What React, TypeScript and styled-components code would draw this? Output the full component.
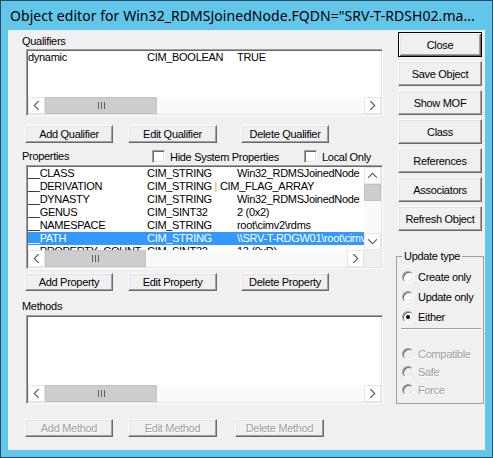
import React from "react";
import styled, { createGlobalStyle } from "styled-components";

const GlobalStyle = createGlobalStyle`
  html, body {
    margin: 0;
    padding: 0;
  }
  body {
    font-family: "Liberation Sans", Arial, sans-serif;
    font-size: 11px;
    letter-spacing: -0.3px;
    color: #000;
  }
`;

const Window = styled.div`
  width: 493px;
  height: 458px;
  box-sizing: border-box;
  border: 1px solid #2d4b5c;
  background: #62c6ea;
  display: flex;
  flex-direction: column;
`;

const TitleBar = styled.div`
  height: 29px;
  padding-left: 9px;
  display: flex;
  align-items: center;
  font-family: "Noto Sans", "Open Sans", sans-serif;
  font-size: 14px;
  letter-spacing: 0.05px;
  color: #000;
  white-space: nowrap;
  overflow: hidden;
`;

const Client = styled.div`
  flex: 1;
  margin: 0 7px 7px;
  background: #f0f0f0;
  display: flex;
`;

const LeftPane = styled.div`
  width: 375px;
  box-sizing: border-box;
  padding: 5px 0 0 14px;
  display: flex;
  flex-direction: column;
`;

const SidePane = styled.div`
  width: 88px;
  margin-left: 13px;
  padding-top: 2px;
  display: flex;
  flex-direction: column;
  gap: 4px;
`;

const FieldLabel = styled.div<{ $top?: number }>`
  height: 13px;
  line-height: 13px;
  margin-top: ${(p) => p.$top ?? 0}px;
`;

/* sunken list frame */
const ListFrame = styled.div<{ $h: number; $top: number }>`
  margin: ${(p) => p.$top}px 0 0 4px;
  width: 357px;
  height: ${(p) => p.$h}px;
  box-sizing: border-box;
  padding: 1px;
  border: 1px solid;
  border-color: #a0a0a0 #fff #fff #a0a0a0;
  box-shadow: inset 1px 1px 0 #696969, inset -1px -1px 0 #e3e3e3;
  background: #fff;
`;

const ListGrid = styled.div<{ $v: boolean }>`
  height: 100%;
  display: grid;
  grid-template-columns: ${(p) => (p.$v ? "minmax(0, 1fr) 17px" : "minmax(0, 1fr)")};
  grid-template-rows: minmax(0, 1fr) 17px;
`;

const Rows = styled.div`
  overflow: hidden;
`;

const Row = styled.div<{ $sel?: boolean }>`
  display: grid;
  grid-template-columns: 119px 90px minmax(0, 1fr);
  height: 13px;
  line-height: 13px;
  white-space: nowrap;
  background: ${(p) => (p.$sel ? "#3399ff" : "transparent")};
  color: ${(p) => (p.$sel ? "#fff" : "#000")};
`;

const Cell = styled.span<{ $clip?: boolean }>`
  overflow: ${(p) => (p.$clip ? "hidden" : "visible")};
`;

const FlagBar = styled.span`
  color: #e59a2c;
`;

const HScroll = styled.div<{ $span: boolean }>`
  grid-column: ${(p) => (p.$span ? "1 / -1" : "1")};
  display: flex;
  height: 17px;
  background: #fafafa;
`;

const VScroll = styled.div`
  grid-row: 1;
  grid-column: 2;
  display: flex;
  flex-direction: column;
  background: #fafafa;
`;

const Corner = styled.div`
  background: #f0f0f0;
`;

const Arrow = styled.div`
  width: 17px;
  height: 17px;
  flex: none;
  display: flex;
  align-items: center;
  justify-content: center;
  box-sizing: border-box;
  border: 1px solid #e6e6e6;
  background: #fff;
`;

const Track = styled.div`
  flex: 1;
  display: flex;
  flex-direction: inherit;
`;

const Thumb = styled.div<{ $len: number; $vertical?: boolean }>`
  flex: none;
  ${(p) => (p.$vertical ? `height: ${p.$len}px;` : `width: ${p.$len}px;`)}
  box-sizing: border-box;
  background: #cdcdcd;
  border: 1px solid #c2c2c2;
  display: flex;
  align-items: center;
  justify-content: center;
`;

const ButtonRow = styled.div<{ $top: number }>`
  display: flex;
  margin-top: ${(p) => p.$top}px;
  margin-left: 3px;
`;

const PushButton = styled.button<{ $w: number; $left?: number; $h?: number; $default?: boolean }>`
  width: ${(p) => p.$w}px;
  height: ${(p) => p.$h ?? 18}px;
  margin-left: ${(p) => p.$left ?? 0}px;
  flex: none;
  padding: 0;
  font: inherit;
  letter-spacing: inherit;
  color: #000;
  background: #f0f0f0;
  border: 1px solid;
  border-color: ${(p) => (p.$default ? "#000" : "#fff #696969 #696969 #fff")};
  box-shadow: ${(p) =>
    p.$default
      ? "inset 1px 1px 0 #fff, inset -1px -1px 0 #696969, inset 2px 2px 0 #e3e3e3, inset -2px -2px 0 #a0a0a0"
      : "inset -1px -1px 0 #a0a0a0, inset 1px 1px 0 #e3e3e3"};
  &:disabled {
    color: #a0a0a0;
    text-shadow: 1px 1px 0 #fff;
  }
`;

const SideButton = styled(PushButton)`
  margin-left: 2px;
`;

const PropHeader = styled.div`
  display: flex;
  align-items: center;
  height: 13px;
  margin-top: 7px;
`;

const CheckItem = styled.label<{ $w?: number }>`
  display: flex;
  align-items: center;
  gap: 5px;
  ${(p) => (p.$w ? `width: ${p.$w}px;` : "")}
  flex: none;
`;

const CheckBox = styled.span`
  width: 13px;
  height: 13px;
  box-sizing: border-box;
  border: 1px solid;
  border-color: #a0a0a0 #fff #fff #a0a0a0;
  box-shadow: inset 1px 1px 0 #696969, inset -1px -1px 0 #e3e3e3;
  background: #fff;
`;

const GroupBox = styled.fieldset`
  margin: 15px 0 0;
  padding: 4px 0 4px 5px;
  border: 1px solid #a0a0a0;
  display: flex;
  flex-direction: column;
`;

const Legend = styled.legend`
  padding: 0 2px;
  height: 13px;
  line-height: 13px;
`;

const RadioRow = styled.div<{ $h: number; $off?: boolean }>`
  display: flex;
  align-items: center;
  gap: 4px;
  height: ${(p) => p.$h}px;
  color: ${(p) => (p.$off ? "#a0a0a0" : "#000")};
  text-shadow: ${(p) => (p.$off ? "1px 1px 0 #fff" : "none")};
`;

const RadioDot = styled.span<{ $on?: boolean; $off?: boolean }>`
  width: 12px;
  height: 12px;
  box-sizing: border-box;
  border-radius: 50%;
  border: 1px solid;
  border-color: #a0a0a0 #fff #fff #a0a0a0;
  box-shadow: inset 1px 1px 0 #696969, inset -1px -1px 0 #e3e3e3;
  background: ${(p) => (p.$off ? "#f0f0f0" : "#fff")};
  display: flex;
  align-items: center;
  justify-content: center;
  &::after {
    content: "";
    width: 4px;
    height: 4px;
    border-radius: 50%;
    background: ${(p) => (p.$on ? "#000" : "transparent")};
  }
`;

const Separator = styled.div`
  width: 80px;
  margin: 1px 0 15px -1px;
  border-top: 1px solid #a0a0a0;
  border-bottom: 1px solid #fff;
`;

type Dir = "left" | "right" | "up" | "down";

const chevron: Record<Dir, string> = {
  left: "5,0 1,4 5,8",
  right: "1,0 5,4 1,8",
  up: "0,5 4,1 8,5",
  down: "0,1 4,5 8,1",
};

function ScrollArrow({ dir }: { dir: Dir }) {
  const wide = dir === "up" || dir === "down";
  return (
    <Arrow>
      <svg width={wide ? 9 : 7} height={wide ? 7 : 9} viewBox={wide ? "0 0 8 6" : "0 0 6 8"}>
        <polyline points={chevron[dir]} fill="none" stroke="#606060" strokeWidth="1" />
      </svg>
    </Arrow>
  );
}

function Grip() {
  return (
    <svg width="7" height="7" viewBox="0 0 7 7">
      <rect x="0" y="0" width="1" height="7" fill="#606060" />
      <rect x="3" y="0" width="1" height="7" fill="#606060" />
      <rect x="6" y="0" width="1" height="7" fill="#606060" />
    </svg>
  );
}

type Item = { name: string; type: React.ReactNode; value: string };

function ListBox({
  h,
  top,
  items,
  thumb,
  vertical,
  selected,
}: {
  h: number;
  top: number;
  items: Item[];
  thumb: number;
  vertical?: boolean;
  selected?: number;
}) {
  return (
    <ListFrame $h={h} $top={top}>
      <ListGrid $v={!!vertical}>
        <Rows>
          {items.map((it, i) => (
            <Row key={it.name} $sel={i === selected}>
              <Cell $clip>{it.name}</Cell>
              <Cell>{it.type}</Cell>
              <Cell $clip>{it.value}</Cell>
            </Row>
          ))}
        </Rows>
        {vertical && (
          <VScroll>
            <ScrollArrow dir="up" />
            <Track>
              <Thumb $len={17} $vertical />
            </Track>
            <ScrollArrow dir="down" />
          </VScroll>
        )}
        <HScroll $span={!vertical}>
          <ScrollArrow dir="left" />
          <Track>
            <Thumb $len={thumb}>
              <Grip />
            </Thumb>
          </Track>
          <ScrollArrow dir="right" />
        </HScroll>
        {vertical && <Corner />}
      </ListGrid>
    </ListFrame>
  );
}

const qualifiers: Item[] = [{ name: "dynamic", type: "CIM_BOOLEAN", value: "TRUE" }];

const properties: Item[] = [
  { name: "__CLASS", type: "CIM_STRING", value: "Win32_RDMSJoinedNode" },
  {
    name: "__DERIVATION",
    type: (
      <>
        CIM_STRING <FlagBar>|</FlagBar> CIM_FLAG_ARRAY
      </>
    ),
    value: "",
  },
  { name: "__DYNASTY", type: "CIM_STRING", value: "Win32_RDMSJoinedNode" },
  { name: "__GENUS", type: "CIM_SINT32", value: "2 (0x2)" },
  { name: "__NAMESPACE", type: "CIM_STRING", value: "root\\cimv2\\rdms" },
  { name: "__PATH", type: "CIM_STRING", value: "\\\\SRV-T-RDGW01\\root\\cimv2\\rdms:Win32_RDMSJoinedNode" },
  { name: "__PROPERTY_COUNT", type: "CIM_SINT32", value: "13 (0xD)" },
];

const sideButtons = ["Save Object", "Show MOF", "Class", "References", "Associators", "Refresh Object"];

export default function App() {
  return (
    <>
      <GlobalStyle />
      <Window>
        <TitleBar>Object editor for Win32_RDMSJoinedNode.FQDN="SRV-T-RDSH02.ma...</TitleBar>
        <Client>
          <LeftPane>
            <FieldLabel>Qualifiers</FieldLabel>
            <ListBox h={67} top={1} items={qualifiers} thumb={112} />
            <ButtonRow $top={9}>
              <PushButton $w={88}>Add Qualifier</PushButton>
              <PushButton $w={89} $left={15}>Edit Qualifier</PushButton>
              <PushButton $w={88} $left={24}>Delete Qualifier</PushButton>
            </ButtonRow>

            <PropHeader>
              <FieldLabel style={{ width: 130 }}>Properties</FieldLabel>
              <CheckItem $w={152}>
                <CheckBox />
                Hide System Properties
              </CheckItem>
              <CheckItem>
                <CheckBox />
                Local Only
              </CheckItem>
            </PropHeader>
            <ListBox h={104} top={2} items={properties} thumb={101} vertical selected={5} />
            <ButtonRow $top={4}>
              <PushButton $w={88}>Add Property</PushButton>
              <PushButton $w={89} $left={15}>Edit Property</PushButton>
              <PushButton $w={88} $left={24}>Delete Property</PushButton>
            </ButtonRow>

            <FieldLabel $top={9}>Methods</FieldLabel>
            <ListBox h={89} top={2} items={[]} thumb={112} />
            <ButtonRow $top={15}>
              <PushButton $w={88} disabled>Add Method</PushButton>
              <PushButton $w={89} $left={15} disabled>Edit Method</PushButton>
              <PushButton $w={89} $left={18} disabled>Delete Method</PushButton>
            </ButtonRow>
          </LeftPane>

          <SidePane>
            <SideButton $w={84} $h={25} $default>Close</SideButton>
            {sideButtons.map((b) => (
              <SideButton key={b} $w={84} $h={25}>
                {b}
              </SideButton>
            ))}
            <GroupBox>
              <Legend>Update type</Legend>
              <RadioRow $h={20}>
                <RadioDot />
                Create only
              </RadioRow>
              <RadioRow $h={20}>
                <RadioDot />
                Update only
              </RadioRow>
              <RadioRow $h={20}>
                <RadioDot $on />
                Either
              </RadioRow>
              <Separator />
              <RadioRow $h={18} $off>
                <RadioDot $off />
                Compatible
              </RadioRow>
              <RadioRow $h={18} $off>
                <RadioDot $off />
                Safe
              </RadioRow>
              <RadioRow $h={18} $off>
                <RadioDot $off />
                Force
              </RadioRow>
            </GroupBox>
          </SidePane>
        </Client>
      </Window>
    </>
  );
}
